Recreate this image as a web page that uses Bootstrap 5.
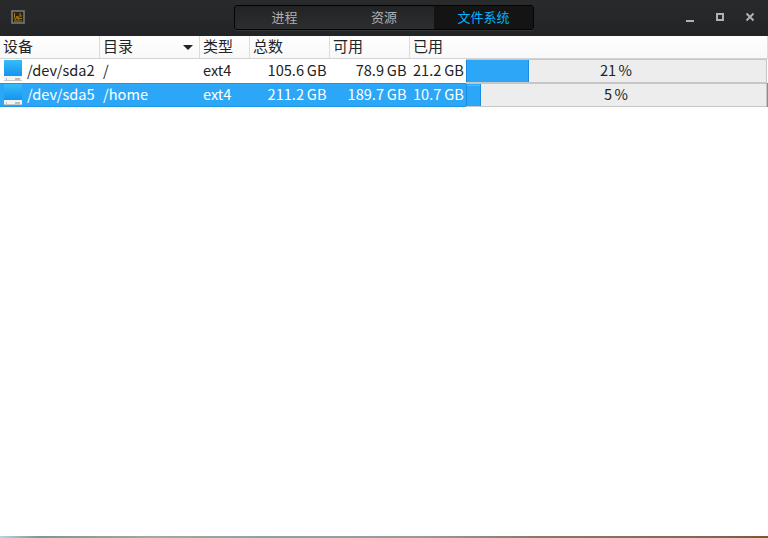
<!DOCTYPE html>
<html lang="zh-CN">
<head>
<meta charset="utf-8">
<title>文件系统</title>
<link href="https://cdn.jsdelivr.net/npm/bootstrap@5.3.0/dist/css/bootstrap.min.css" rel="stylesheet">
<style>
body{font-family:"Noto Sans CJK SC",sans-serif;font-size:14.6px;line-height:23px;color:#232323;background:#fff;height:538px;overflow:hidden}
.titlebar{height:36px;background:linear-gradient(#292a2c,#232426);padding:0 10px 0 11px;flex:none;display:grid;grid-template-columns:223px 300px 1fr}
.switcher{width:300px;height:25px;margin-top:-2px;border:1px solid #040404;border-radius:3px;box-shadow:0 1px 0 #343537;overflow:hidden;background:linear-gradient(#222325,#2d2e30)}
.switcher .btn{width:100px;flex:none;padding:0 0 2px;border:0;border-radius:0;font-size:13px;line-height:21px;color:#b0b1b2}
.switcher .btn:first-child,.switcher .btn:last-child{width:99px}
.switcher .btn.active{background:#141415;color:#00b4ff}
.controls{gap:14px;margin-top:-2px}
.app-icon{margin-top:-2px}
.grid-row{display:grid;grid-template-columns:100px 100px 50px 80px 80px 358px;height:24px;flex:none}
.grid-head{height:23px;font-size:15px;background:linear-gradient(#fff,#f8f8f8);border-bottom:1px solid #d3d3d3}
.grid-head>div{padding:0 3px;border-right:1px solid #dcdcdc;line-height:20px}
.grid-head svg{margin:9px 2px 0 0}
.grid-row:not(.grid-head)>div{padding:0 3px;white-space:pre;line-height:22px;word-spacing:-.4px}
.grid-row:not(.grid-head)>.text-end{padding-right:3.5px}
.picked{background:#2ca7f8;color:#fff;border-top:1px solid #1d97e8;border-bottom:1px solid #1d97e8}
.grid-row.picked:not(.grid-head)>div{line-height:20px}
.usage{width:301px;height:24px;background:#ededed;border:1px solid #c6c6c6;border-left:0;border-radius:0;font-size:14.6px;color:#232323;overflow:hidden}
.picked .usage{margin-top:-1px;margin-bottom:-1px}
.usage .progress-bar{background:#2ca7f8;border:1px solid #168de0;margin:-1px 0}
.picked .progress-bar{box-shadow:inset 0 1px 0 #2ca7f8,inset 0 2px 0 #5dbcfa}
.usage-label{inset:0;line-height:20px;text-align:center;word-spacing:-.8px}
.disk{margin-left:-2px;margin-right:2px;flex:none}
.amount{width:53px;flex:none}
.bottom-edge{height:2px;background:linear-gradient(90deg,#b4d4e8 0,#7d9793 5%,#a1a99b 20%,#8da3a7 34%,#9b9994 55%,#89796a 70%,#7d6957 92%,#815633 100%)}
</style>
<script src="https://cdn.jsdelivr.net/npm/bootstrap@5.3.0/dist/js/bootstrap.bundle.min.js"></script>
</head>
<body class="d-flex flex-column">
<header class="titlebar align-items-center">
  <svg class="app-icon" width="14" height="14" viewBox="0 0 14 14"><rect x="1" y="1" width="12" height="12" fill="#2c2410" stroke="#77787a" stroke-width="1.6"/><path d="M3.500 3v4l1 3 1.500-4 1.500 4L8 6M9 3v3h2M8 8.500h3M3 11h8" fill="none" stroke="#a67a12"/></svg>
  <div class="switcher d-flex">
    <button class="btn">进程</button><button class="btn">资源</button><button class="btn active">文件系统</button>
  </div>
  <div class="controls d-flex justify-content-end">
    <svg width="16" height="16"><path d="M4 11h8v2H4z" fill="#b0b1b2"/></svg>
    <svg width="16" height="16"><path d="M5 5h6v6H5z" fill="none" stroke="#b0b1b2" stroke-width="2"/></svg>
    <svg width="16" height="16"><path d="M4.500 4.500l7 7m0-7l-7 7" stroke="#b0b1b2" stroke-width="2"/></svg>
  </div>
</header>
<main class="d-flex flex-column flex-grow-1">
  <div class="grid-row grid-head">
    <div>设备</div>
    <div class="d-flex justify-content-between align-items-start">目录<svg width="12" height="6"><path d="M1 0h10L6 5z" fill="#232323"/></svg></div>
    <div>类型</div><div>总数</div><div>可用</div><div>已用</div>
  </div>
  <div class="grid-row">
    <div class="d-flex"><svg class="disk" width="24" height="24"><use href="#disk" width="24" height="24"/></svg><span>/dev/sda2</span></div>
    <div>/</div><div>ext4</div><div class="text-end">105.6 GB</div><div class="text-end">78.9 GB</div>
    <div class="d-flex pe-0"><span class="amount">21.2 GB</span><div class="usage progress position-relative"><div class="progress-bar" style="width:63px"></div><span class="usage-label position-absolute">21 %</span></div></div>
  </div>
  <div class="grid-row picked">
    <div class="d-flex"><svg class="disk" width="24" height="22" viewBox="0 1 24 22"><use href="#disk" width="24" height="24"/></svg><span>/dev/sda5</span></div>
    <div>/home</div><div>ext4</div><div class="text-end">211.2 GB</div><div class="text-end">189.7 GB</div>
    <div class="d-flex pe-0"><span class="amount">10.7 GB</span><div class="usage progress position-relative"><div class="progress-bar" style="width:15px"></div><span class="usage-label position-absolute">5 %</span></div></div>
  </div>
</main>
<div class="bottom-edge"></div>
<svg width="0" height="0" class="position-absolute">
  <linearGradient id="blue" x2="0" y2="1"><stop stop-color="#35bdf9"/><stop offset="1" stop-color="#1593ee"/></linearGradient>
  <symbol id="disk" viewBox="0 0 24 24"><path d="M3 1h18v16H3z" fill="url(#blue)"/><path d="M3 17h18v5H3z" fill="#f2f3f4"/><path d="M3 21.500h18" stroke="#c5c7c9"/><path d="M5 20h1M14 20h5" stroke="#85898c"/></symbol>
</svg>
</body>
</html>
